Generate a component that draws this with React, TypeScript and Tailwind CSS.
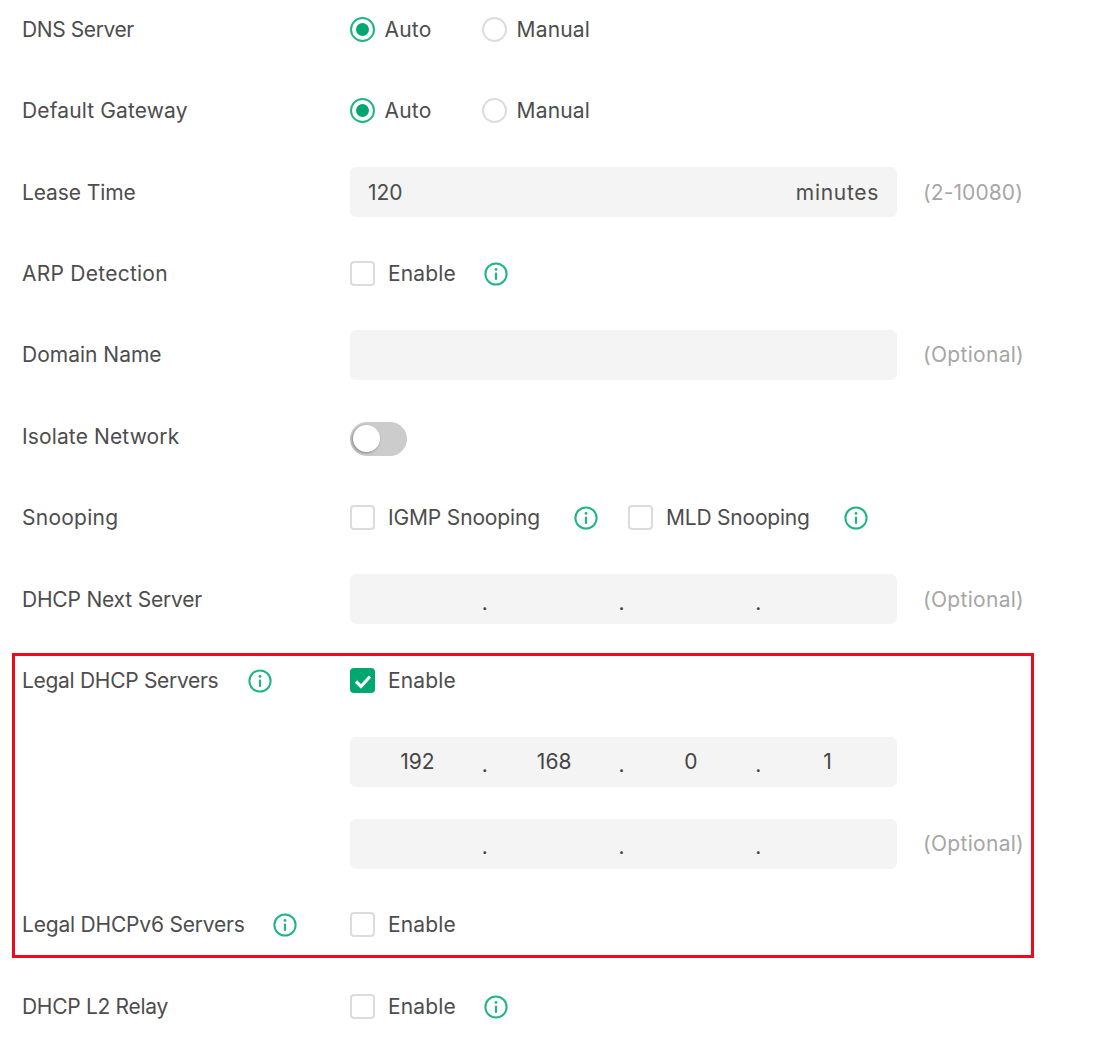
import { ReactNode } from "react"

const font = { fontFamily: "Inter, sans-serif" }

function Info({ className = "" }: { className?: string }) {
  return (
    <svg viewBox="0 0 24 24" className={`h-[24px] w-[24px] shrink-0 ${className}`} fill="none">
      <circle cx="12" cy="12" r="10.6" stroke="#1fb585" strokeWidth="2" />
      <circle cx="12" cy="7.4" r="1.4" fill="#1fb585" />
      <rect x="10.9" y="10.4" width="2.2" height="7.6" rx="1" fill="#1fb585" />
    </svg>
  )
}

function Radio({ checked, label, className = "" }: { checked?: boolean; label: string; className?: string }) {
  return (
    <div className={`flex items-center ${className}`}>
      <span
        className={`flex h-[25px] w-[25px] items-center justify-center rounded-full border-2 ${
          checked ? "border-[#1fb585]" : "border-[#dcdcdc]"
        }`}
      >
        {checked && <span className="h-[13px] w-[13px] rounded-full bg-[#00a870]" />}
      </span>
      <span className="ml-[9.5px] tracking-[0.2px]">{label}</span>
    </div>
  )
}

function Checkbox({
  checked,
  label,
  className = "",
  textClass = "tracking-[0.15px]",
}: {
  checked?: boolean
  label: string
  className?: string
  textClass?: string
}) {
  return (
    <div className={`flex items-center ${className}`}>
      {checked ? (
        <span className="flex h-[25px] w-[25px] items-center justify-center rounded-[4px] bg-[#00a870]">
          <svg viewBox="0 0 24 24" className="h-[24px] w-[24px]" fill="none" stroke="white" strokeWidth="3.2">
            <path d="M5 12.5l5 5 9-10" />
          </svg>
        </span>
      ) : (
        <span className="h-[25px] w-[25px] rounded-[4px] border-2 border-[#dcdcdc]" />
      )}
      <span className={`ml-[13px] ${textClass}`}>{label}</span>
    </div>
  )
}

function Row({
  label,
  labelClass = "",
  info,
  children,
}: {
  label: string
  labelClass?: string
  info?: string
  children: ReactNode
}) {
  return (
    <div className="flex h-[50px] items-center">
      <div className="flex w-[328px] shrink-0 items-center">
        <span className={labelClass}>{label}</span>
        {info && <Info className={info} />}
      </div>
      <div className="flex flex-1 items-center">{children}</div>
    </div>
  )
}

function Suffix({ children, className = "tracking-[0.3px]" }: { children: ReactNode; className?: string }) {
  return <span className={`ml-[26px] text-[#a6a6a6] ${className}`}>{children}</span>
}

function IpInput({ values = ["", "", "", ""] }: { values?: string[] }) {
  return (
    <div className="flex h-[50px] w-[547px] items-center rounded-[6px] bg-[#f4f4f4] text-[#444]">
      {values.map((v, i) => (
        <div key={i} className="flex flex-1 items-center">
          <span className="flex-1 pr-[2px] text-center">{v}</span>
          {i < 3 && <span className="w-0 -translate-x-[5px] translate-y-[3px]">.</span>}
        </div>
      ))}
    </div>
  )
}

export default function App() {
  return (
    <div className="min-h-screen bg-white pl-[22px] pt-[4.6px] text-[21px] text-[#4d4d4d]" style={font}>
      <div className="flex flex-col gap-[31.4px]">
        <Row label="DNS Server" labelClass="tracking-[-0.4px]">
          <Radio checked label="Auto" />
          <Radio label="Manual" className="ml-[50.5px]" />
        </Row>
        <Row label="Default Gateway" labelClass="tracking-[0.13px]">
          <Radio checked label="Auto" />
          <Radio label="Manual" className="ml-[50.5px]" />
        </Row>
        <Row label="Lease Time" labelClass="tracking-[-0.1px]">
          <div className="flex h-[50px] w-[547px] items-center justify-between rounded-[6px] bg-[#f4f4f4] px-[18px]">
            <span>120</span>
            <span className="tracking-[0.7px]">minutes</span>
          </div>
          <Suffix className="tracking-[0.1px]">(2-10080)</Suffix>
        </Row>
        <Row label="ARP Detection" labelClass="tracking-[0.25px]">
          <Checkbox label="Enable" />
          <Info className="ml-[28px]" />
        </Row>
        <Row label="Domain Name">
          <div className="h-[50px] w-[547px] rounded-[6px] bg-[#f4f4f4]" />
          <Suffix>(Optional)</Suffix>
        </Row>
        <Row label="Isolate Network" labelClass="tracking-[0.13px]">
          <span className="mt-[4px] flex h-[34px] w-[57px] items-center rounded-full bg-[#cccccc] pl-[3px]">
            <span className="h-[27px] w-[27px] rounded-full bg-white shadow-[-1px_1px_3px_rgba(0,0,0,0.35)]" />
          </span>
        </Row>
        <Row label="Snooping" labelClass="tracking-[0.25px]">
          <Checkbox label="IGMP Snooping" textClass="tracking-[-0.15px]" />
          <Info className="ml-[34px]" />
          <Checkbox label="MLD Snooping" textClass="tracking-[-0.2px]" className="ml-[30px]" />
          <Info className="ml-[34px]" />
        </Row>
        <Row label="DHCP Next Server" labelClass="tracking-[-0.2px]">
          <IpInput />
          <Suffix>(Optional)</Suffix>
        </Row>
        <div className="-mb-[8px] -ml-[10px] -mt-[3px] flex w-[1022px] flex-col gap-[31.4px] border-[3px] border-[#ee0a1e] pb-[5.6px] pl-[7px]">
          <Row label="Legal DHCP Servers" labelClass="tracking-[-0.3px]" info="ml-[30px]">
            <Checkbox checked label="Enable" />
          </Row>
          <Row label="">
            <IpInput values={["192", "168", "0", "1"]} />
          </Row>
          <Row label="">
            <IpInput />
            <Suffix>(Optional)</Suffix>
          </Row>
          <Row label="Legal DHCPv6 Servers" labelClass="tracking-[-0.2px]" info="ml-[28px]">
            <Checkbox label="Enable" />
          </Row>
        </div>
        <Row label="DHCP L2 Relay" labelClass="tracking-[-0.3px]">
          <Checkbox label="Enable" />
          <Info className="ml-[28px]" />
        </Row>
      </div>
    </div>
  )
}
